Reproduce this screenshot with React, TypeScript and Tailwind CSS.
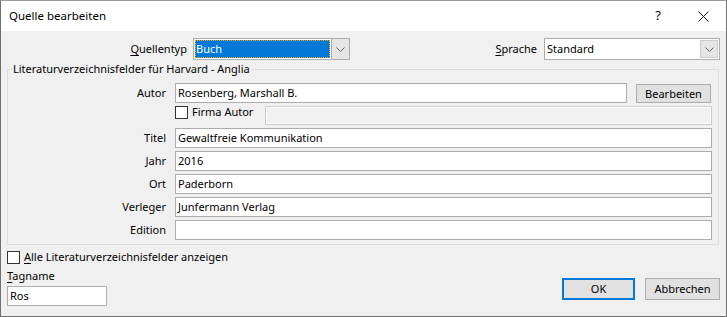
import { useState } from "react";

const Field = ({ label, value }: { label: string; value: string }) => (
  <div className="flex items-center h-[20px] mt-[3px]">
    <span className="w-[155px] text-right pr-[1px]">{label}</span>
    <div className="ml-[8px] w-[537px] h-[20px] bg-white border border-[#adadad] px-[2px] leading-[18px]">
      {value}
    </div>
  </div>
);

const Chevron = () => (
  <svg width="9" height="5" viewBox="0 0 9 5" className="block">
    <path d="M0.5 0.5 L4.5 4.5 L8.5 0.5" fill="none" stroke="#606060" strokeWidth="1" />
  </svg>
);

const Checkbox = () => (
  <span className="inline-block w-[13px] h-[13px] bg-white border border-[#333333] shrink-0" />
);

export default function App() {
  const [typ] = useState("Buch");
  const fields = [
    { label: "Titel", value: "Gewaltfreie Kommunikation" },
    { label: "Jahr", value: "2016" },
    { label: "Ort", value: "Paderborn" },
    { label: "Verleger", value: "Junfermann Verlag" },
    { label: "Edition", value: "" },
  ];

  return (
    <div
      className="w-[727px] h-[317px] flex flex-col border border-[#6f6f6f] border-t-[#9a9a9a] text-[11px] text-black bg-[#f0f0f0] overflow-hidden whitespace-nowrap"
      style={{ fontFamily: '"Segoe UI", "Noto Sans", sans-serif' }}
    >
      {/* title bar */}
      <div className="h-[30px] bg-white flex items-center shrink-0">
        <span className="ml-[8px] text-[11.5px]">Quelle bearbeiten</span>
        <span className="ml-auto w-[20px] text-center text-[13px]">?</span>
        <span className="ml-[25px] mr-[13px] w-[20px] flex justify-center">
          <svg width="11" height="11" viewBox="0 0 11 11">
            <path d="M0.5 0.5 L10.5 10.5 M10.5 0.5 L0.5 10.5" stroke="#111" strokeWidth="1" />
          </svg>
        </span>
      </div>

      <div className="flex-1 px-[6px] pb-[10px] flex flex-col">
        {/* top row */}
        <div className="flex items-center h-[22px] mt-[7px]">
          <span className="w-[180px] text-right">
            <span className="underline underline-offset-2">Q</span>uellentyp
          </span>
          <div className="ml-[6px] w-[157px] h-[22px] flex bg-white border border-[#adadad]">
            <div className="flex-1 m-[1px] bg-[#0078d7] text-white outline-1 outline-dotted outline-[#f5a623] -outline-offset-1 px-[1px] leading-[17px]">
              {typ}
            </div>
            <div className="w-[18px] bg-[#e5e5e5] border-l border-[#adadad] flex items-center justify-center">
              <Chevron />
            </div>
          </div>
          <span className="ml-auto">
            <span className="underline underline-offset-2">S</span>prache
          </span>
          <div className="ml-[7px] w-[176px] h-[22px] flex bg-white border border-[#adadad]">
            <div className="flex-1 px-[2px] leading-[20px]">Standard</div>
            <div className="w-[18px] m-[1px] bg-[#e5e5e5] border border-[#cccccc] flex items-center justify-center">
              <Chevron />
            </div>
          </div>
        </div>

        {/* group box */}
        <fieldset className="mt-[1px] w-[712px] border border-[#dcdcdc] px-[4px] pt-[6px] pb-[4px]">
          <legend className="px-[1px] leading-[16px]">Literaturverzeichnisfelder für Harvard - Anglia</legend>
          <div className="flex items-center h-[20px]">
            <span className="w-[155px] text-right pr-[1px]">Autor</span>
            <div className="ml-[8px] w-[452px] h-[20px] bg-white border border-[#adadad] px-[2px] leading-[18px]">
              Rosenberg, Marshall B.
            </div>
            <button className="ml-[9px] w-[75px] h-[19px] bg-[#e1e1e1] border border-[#adadad] leading-[17px]">
              Bearbeiten
            </button>
          </div>
          <div className="flex items-start h-[21px] mt-[1px] pl-[163px]">
            <div className="flex items-center h-[15px] mt-[1px]">
              <Checkbox />
              <span className="ml-[4px]">Firma Autor</span>
            </div>
            <div className="ml-auto mr-[2px] w-[447px] h-[19px] mt-[2px] border border-[#cccccc] bg-[#f0f0f0] shadow-[inset_0_0_0_1px_#ffffff]" />
          </div>
          <div className="mt-[1px]">
            {fields.map((f) => (
              <Field key={f.label} label={f.label} value={f.value} />
            ))}
          </div>
        </fieldset>

        {/* bottom */}
        <div className="flex items-center mt-[6px] h-[13px]">
          <Checkbox />
          <span className="ml-[4px]">
            <span className="underline underline-offset-2">A</span>lle Literaturverzeichnisfelder anzeigen
          </span>
        </div>
        <div className="flex items-end justify-between mt-auto">
          <div className="flex flex-col">
            <span className="leading-[16px]">
              <span className="underline underline-offset-2">T</span>agname
            </span>
            <div className="mt-[2px] w-[100px] h-[20px] bg-white border border-[#adadad] px-[2px] leading-[18px]">
              Ros
            </div>
          </div>
          <div className="flex gap-[10px] mb-[6px]">
            <button className="w-[73px] h-[22px] bg-[#e1e1e1] border-2 border-[#0078d7]">OK</button>
            <button className="w-[75px] h-[22px] bg-[#e1e1e1] border border-[#adadad]">Abbrechen</button>
          </div>
        </div>
      </div>
    </div>
  );
}
